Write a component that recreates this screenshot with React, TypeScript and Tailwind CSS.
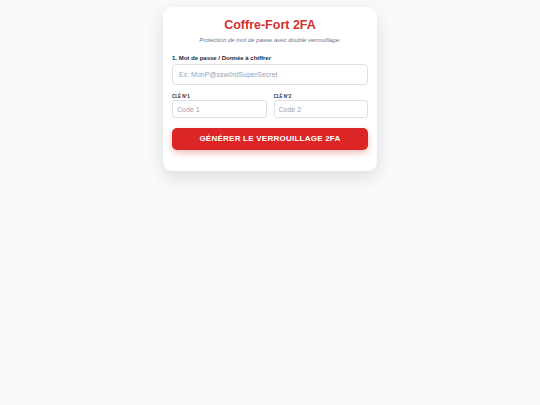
export default function App() {
  return (
    <div className="min-h-[405px] w-full bg-[#f8fafc] pt-[7px] font-['Liberation_Sans',Arial,sans-serif]">
      <div className="mx-auto w-[214px] rounded-[9px] bg-white px-[9px] pt-[10px] pb-[21px] shadow-[0_6px_18px_rgba(0,0,0,0.12)]">
        <h1 className="text-center text-[12.5px] font-bold leading-[16px] text-[#d32f2f]">Coffre-Fort 2FA</h1>
        <p className="mt-[3px] text-center text-[6px] italic leading-[8px] text-[#64748b]">
          Protection de mot de passe avec double verrouillage.
        </p>
        <div className="mt-[10px]">
          <label className="block text-[6px] font-bold leading-[8px] text-[#1e293b]">
            1. Mot de passe / Donnée à chiffrer
          </label>
          <input
            className="mt-[2px] block h-[21px] w-full rounded-[4px] border border-[#dde1e7] px-[6px] text-[7px] text-[#334155] outline-none placeholder:text-[#9ca3af]"
            placeholder="Ex: MonP@ssw0rdSuperSecret"
          />
        </div>
        <div className="mt-[9px] grid grid-cols-2 gap-[7px]">
          <div>
            <label className="block text-[4.5px] font-bold uppercase leading-[6px] text-[#1e293b]">Clé N°1</label>
            <input
              className="block h-[18px] w-full rounded-[3px] border border-[#dde1e7] px-[4px] text-[7px] outline-none placeholder:text-[#9ca3af]"
              placeholder="Code 1"
            />
          </div>
          <div>
            <label className="block text-[4.5px] font-bold uppercase leading-[6px] text-[#1e293b]">Clé N°2</label>
            <input
              className="block h-[18px] w-full rounded-[3px] border border-[#dde1e7] px-[4px] text-[7px] outline-none placeholder:text-[#9ca3af]"
              placeholder="Code 2"
            />
          </div>
        </div>
        <button className="mt-[10px] block h-[22px] w-full rounded-[5px] bg-[#dc2626] text-[8px] font-bold uppercase tracking-[0.03em] text-white shadow-[0_3px_6px_rgba(220,38,38,0.3)]">
          Générer le verrouillage 2FA
        </button>
      </div>
    </div>
  );
}
